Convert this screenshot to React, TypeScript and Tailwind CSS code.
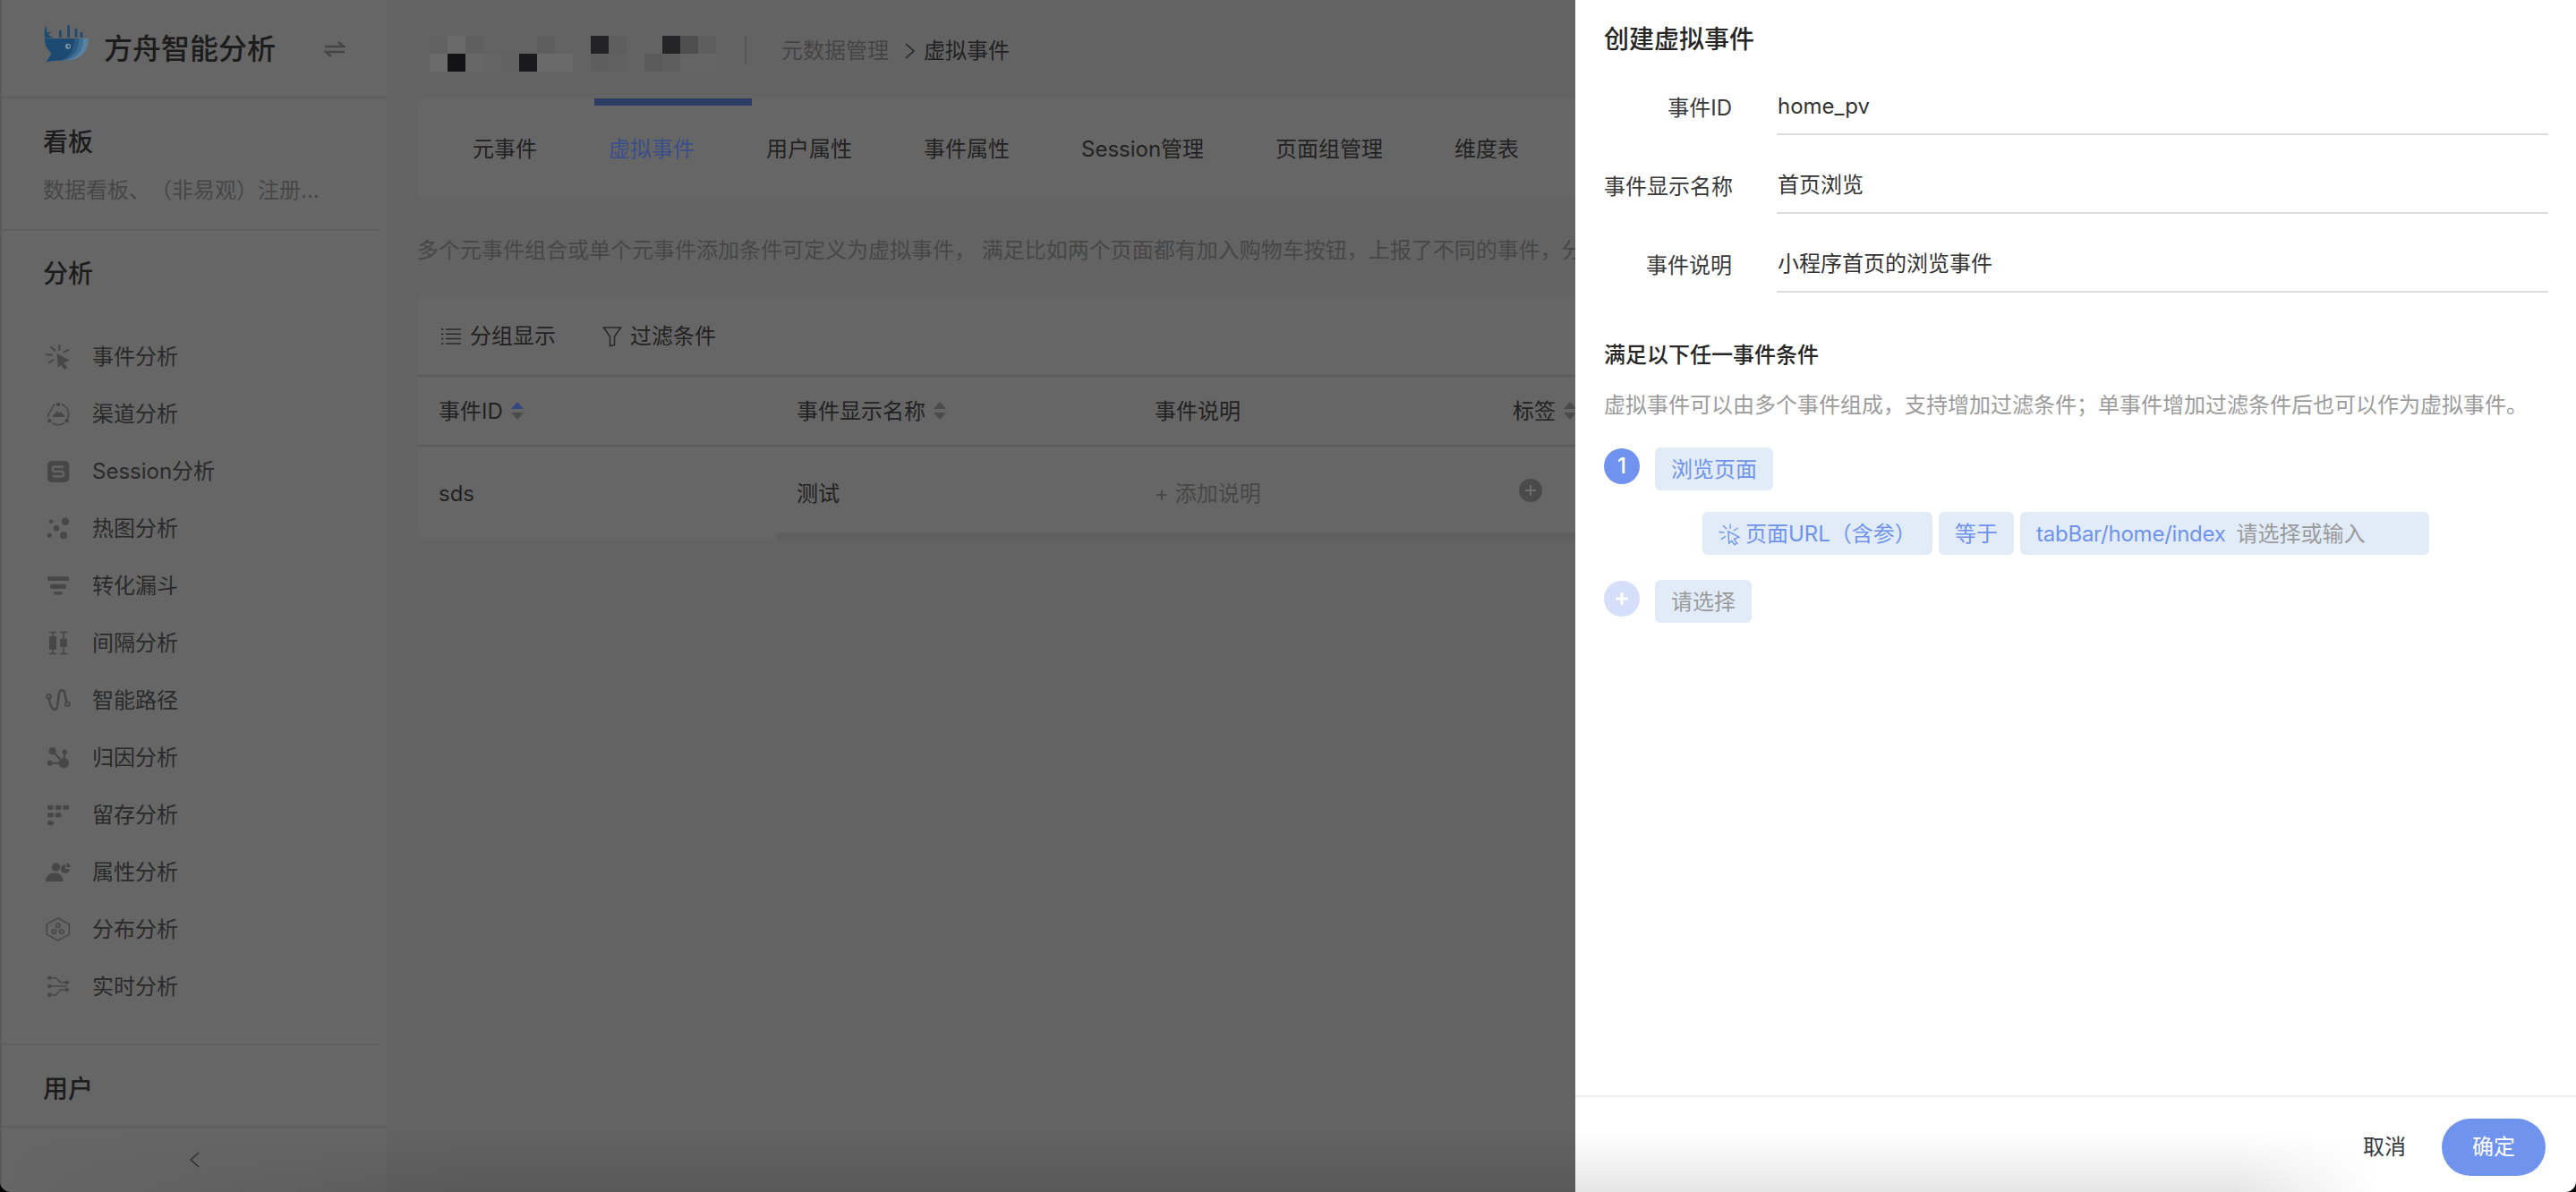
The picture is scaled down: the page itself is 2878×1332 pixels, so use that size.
import React from "react";

const NAV_ICON = "#474747";

const mosaicTop = [
  "bg-[#626262]", "bg-[#6a6a6a]", "bg-[#5f5f5f]", "bg-[#636363]", "bg-[#636363]", "bg-[#636363]", "bg-[#5e5e5e]", "bg-[#636363]",
  "bg-[#636363]", "bg-[#232325]", "bg-[#5e5e5e]", "bg-[#636363]", "bg-[#636363]", "bg-[#252527]", "bg-[#4e4e4e]", "bg-[#5e5e5e]",
];
const mosaicBottom = [
  "bg-[#6b6b6b]", "bg-[#131316]", "bg-[#676767]", "bg-[#656565]", "bg-[#626262]", "bg-[#1a1a1d]", "bg-[#6a6a6a]", "bg-[#6a6a6a]",
  "bg-[#636363]", "bg-[#5e5e5e]", "bg-[#616161]", "bg-[#636363]", "bg-[#5a5a5a]", "bg-[#5e5e5e]", "bg-[#656565]", "bg-[#656565]",
];

function Logo() {
  return (
    <svg width="70" height="60" viewBox="0 0 210 180" className="self-start mt-[20px] shrink-0">
      <path d="M35 25 C28 40 28 55 32 68 L58 66 L40 56 L56 44 L38 50 Z" fill="#1d4a70" />
      <rect x="78" y="42" width="8" height="24" fill="#1d4a70" />
      <rect x="106" y="25" width="8" height="41" fill="#1d4a70" />
      <rect x="131" y="35" width="8" height="31" fill="#1d4a70" />
      <rect x="149" y="48" width="8" height="18" fill="#1d4a70" />
      <path d="M30 70 H176 C176 115 150 140 105 142 C85 143 60 143 35 148 C42 135 50 128 52 118 C38 105 30 90 30 70 Z" fill="#5a83a3" />
      <path d="M30 70 H160 C160 112 136 136 100 142 C85 143 60 143 35 148 C42 135 50 128 52 118 C38 105 30 90 30 70 Z" fill="#3f6f95" />
      <path d="M30 70 H145 C145 108 124 132 95 142 C85 143 60 143 35 148 C42 135 50 128 52 118 C38 105 30 90 30 70 Z" fill="#2a5a82" />
      <path d="M30 70 H130 C130 105 112 130 88 142 C78 143 60 143 35 148 C42 135 50 128 52 118 C38 105 30 90 30 70 Z" fill="#1d4a70" />
      <circle cx="108" cy="95" r="9" fill="#7c97ab" />
      <circle cx="110" cy="95" r="4" fill="#1d4a70" />
    </svg>
  );
}

function Svg({ children }: { children: React.ReactNode }) {
  return (
    <svg width="26" height="26" viewBox="0 0 26 26" className="shrink-0 overflow-visible" fill={NAV_ICON} stroke="none">
      {children}
    </svg>
  );
}

const lineProps = { stroke: NAV_ICON, strokeWidth: 1.6, strokeLinecap: "round" as const, fill: "none" };

const icons: Record<string, React.ReactNode> = {
  click: (
    <>
      <polygon points="11.7,9.3 26,16.7 19.3,19.3 23.3,25 20,26.7 16,21.7 12.7,25" />
      <g {...lineProps} strokeWidth={2}>
        <path d="M5 1.7 9.3 5.7M14.3 0V5M24.3 5 19.3 7.7M0 10 6 10.7M2.7 19.3 7.7 16" />
      </g>
    </>
  ),
  channel: (
    <>
      <g {...lineProps}>
        <path d="M5 8.5A12 12 0 0 1 9 1.8M17 1.8A12 12 0 0 1 24.6 12 12 12 0 0 1 23.5 18M19.5 22.8A12 12 0 0 1 7 23" />
        <path d="M1.6 16A12 12 0 0 1 5 8.5" />
      </g>
      <circle cx="13" cy="2" r="2.2" />
      <circle cx="3.3" cy="20.3" r="2.2" />
      <circle cx="22.7" cy="20.3" r="2.2" />
      <polygon points="6,16 11.7,9.3 14.3,12 16,10 21,16" />
    </>
  ),
  session: (
    <>
      <rect x="1" y="1" width="24.3" height="24" rx="5" />
      <path d="M19 7.5H9.5a2.7 2.7 0 0 0 0 5.4h7a2.7 2.7 0 0 1 0 5.4H7" fill="none" stroke="#666666" strokeWidth="2.3" />
    </>
  ),
  dots: (
    <>
      <circle cx="5" cy="4.7" r="2.3" />
      <circle cx="21" cy="4.7" r="4.2" />
      <circle cx="11" cy="12.3" r="3.3" />
      <circle cx="3.3" cy="20.3" r="2.6" />
      <circle cx="19" cy="20.3" r="4" />
    </>
  ),
  funnel: (
    <>
      <rect x="1" y="2.3" width="24" height="4.7" rx="1" />
      <rect x="4.3" y="10.7" width="17.3" height="5.3" rx="1" />
      <rect x="8.3" y="19.3" width="9.3" height="3.3" rx="1" />
    </>
  ),
  interval: (
    <>
      <rect x="3" y="5" width="8" height="15" rx="1" />
      <rect x="15" y="7.7" width="8" height="9" rx="1" />
      <g {...lineProps} strokeLinecap="butt">
        <path d="M3 0.5H11M7 0.5V24.5M3 24.5H11M15 0.5H23M19 0.5V24.5M15 24.5H23" />
      </g>
    </>
  ),
  path: (
    <g {...lineProps} strokeWidth={2.6}>
      <circle cx="2.7" cy="8.3" r="2.3" strokeWidth={2} />
      <circle cx="23.3" cy="16.7" r="2.3" strokeWidth={2} />
      <path d="M2.7 11.500C4 18 5.500 23 9.300 23 15 23 11 1.300 17 1.300 21.700 1.300 20.500 11 22.500 14" />
    </g>
  ),
  attribution: (
    <>
      <g {...lineProps} strokeWidth={2}>
        <path d="M6.7 5.3 19.3 18.7M20.3 6.3 19.3 18.7M3.7 18.7H19.3" />
      </g>
      <circle cx="6.7" cy="5.3" r="4" />
      <circle cx="20.3" cy="6.3" r="2.7" />
      <circle cx="3.7" cy="18.7" r="3" />
      <circle cx="19.3" cy="18.7" r="5.7" />
    </>
  ),
  retention: (
    <>
      <rect x="1" y="1.7" width="6.7" height="5" rx="1.4" />
      <rect x="9.7" y="1.7" width="6.7" height="5" rx="1.4" />
      <rect x="18.3" y="1.7" width="6.7" height="5" rx="1.4" />
      <rect x="1" y="10.3" width="6.7" height="5" rx="1.4" />
      <rect x="9.7" y="10.3" width="6.7" height="5" rx="1.4" />
      <rect x="1" y="19.3" width="6.7" height="5" rx="1.4" />
    </>
  ),
  attr: (
    <>
      <circle cx="10.500" cy="7" r="4.700" />
      <path d="M-1 23C-1 16.500 4 13.500 9 13.500 14 13.500 18.500 16.500 18.500 23Z" />
      <path d="M21 4A5 5 0 1 0 26 9H21Z" />
      <path d="M22.500 2.600A5 5 0 0 1 27 7H22.500Z" />
    </>
  ),
  dist: (
    <g {...lineProps} strokeWidth={1.5}>
      <path d="M12.7 0 25.3 6.7V18.3L12.7 25 0.3 18.3V6.7Z" />
      <circle cx="12.7" cy="8.3" r="2.2" />
      <circle cx="8.3" cy="15" r="2.2" />
      <circle cx="17" cy="15" r="2.2" />
    </g>
  ),
  realtime: (
    <>
      <g {...lineProps}>
        <path d="M3.3 2.7H10.5L15.5 7.7H22.7M3.3 12H22M3.3 21.7H10.5L15.5 16H22.7" />
      </g>
      <circle cx="3.3" cy="2.7" r="2.2" />
      <circle cx="3.3" cy="12" r="2.2" />
      <circle cx="3.3" cy="21.7" r="2.2" />
      <circle cx="22.7" cy="7.7" r="2.2" />
      <circle cx="22.7" cy="16" r="2.2" />
    </>
  ),
};

const navItems = [
  { icon: "click", label: "事件分析" },
  { icon: "channel", label: "渠道分析" },
  { icon: "session", label: "Session分析" },
  { icon: "dots", label: "热图分析" },
  { icon: "funnel", label: "转化漏斗" },
  { icon: "interval", label: "间隔分析" },
  { icon: "path", label: "智能路径" },
  { icon: "attribution", label: "归因分析" },
  { icon: "retention", label: "留存分析" },
  { icon: "attr", label: "属性分析" },
  { icon: "dist", label: "分布分析" },
  { icon: "realtime", label: "实时分析" },
];

const tabs = ["元事件", "虚拟事件", "用户属性", "事件属性", "Session管理", "页面组管理", "维度表"];

function SortIcon({ active }: { active?: boolean }) {
  return (
    <svg width="16" height="20" viewBox="0 0 16 20" className="shrink-0 ml-[8px] -mt-[2px]">
      <polygon points="8,0 15,8 1,8" fill={active ? "#35477f" : "#4b4b4b"} />
      <polygon points="8,20 15,12 1,12" fill="#4b4b4b" />
    </svg>
  );
}

function Sidebar() {
  return (
    <aside className="w-[432px] h-full shrink-0 flex flex-col bg-[#666666] border-l-2 border-[#5a5a5a]">
      <div className="h-[110px] shrink-0 flex items-center pl-[38px] border-b-2 border-[#5e5e5e]">
        <Logo />
        <span className="ml-[6px] text-[32px] leading-[44px] font-medium text-[#1c1c1c] mt-[2px]">方舟智能分析</span>
        <svg width="24" height="18" viewBox="0 0 24 18" className="ml-[54px] mt-[2px]" fill="none" stroke="#454545" strokeWidth="2.4">
          <path d="M1 6H22L16 1M23 12H2L8 17" />
        </svg>
      </div>
      <div className="flex-1 min-h-0 overflow-hidden mr-[8px]">
        <div className="pt-[29px] pb-[27px] pl-[46px] border-b-2 border-[#5e5e5e]">
          <div className="text-[28px] leading-[40px] font-medium text-[#1c1c1c]">看板</div>
          <div className="mt-[18px] text-[24px] leading-[32px] text-[#474747] [text-spacing-trim:space-all]">数据看板、（非易观）注册...</div>
        </div>
        <div className="pt-[28px] pb-[32px] border-b-2 border-[#5e5e5e]">
          <div className="pl-[46px] text-[28px] leading-[40px] font-medium text-[#1c1c1c]">分析</div>
          <div className="mt-[40px]">
            {navItems.map((item) => (
              <div key={item.label} className="h-[64px] flex items-center pl-[50px]">
                <div className="mt-[1px]">
                  <Svg>{icons[item.icon]}</Svg>
                </div>
                <span className="ml-[25px] pt-[2px] text-[24px] leading-[32px] text-[#2a2a2a]">{item.label}</span>
              </div>
            ))}
          </div>
        </div>
        <div className="pt-[29px] pl-[46px] text-[28px] leading-[40px] font-medium text-[#1c1c1c]">用户</div>
      </div>
      <div className="h-[74px] shrink-0 border-t-2 border-[#5e5e5e] flex items-center justify-center">
        <svg width="12" height="18" viewBox="0 0 12 18" fill="none" stroke="#333333" strokeWidth="1.6">
          <path d="M11 1 2 9 11 17" />
        </svg>
      </div>
    </aside>
  );
}

function Main() {
  return (
    <main className="flex-1 min-w-0 h-full bg-[#636363] overflow-hidden">
      <div className="h-[110px] flex pl-[48px]">
        <div className="mt-[40px] blur-[0.6px]">
          <div className="flex">
            {mosaicTop.map((c, i) => (
              <div key={i} className={`w-[20px] h-[20px] ${c}`} />
            ))}
          </div>
          <div className="flex">
            {mosaicBottom.map((c, i) => (
              <div key={i} className={`w-[20px] h-[20px] ${c}`} />
            ))}
          </div>
        </div>
        <div className="w-[2px] h-[32px] mt-[40px] ml-[32px] bg-[#565656]" />
        <div className="ml-[39px] mt-[41px] h-[32px] flex items-center text-[24px] leading-[32px] whitespace-nowrap">
          <span className="text-[#454545]">元数据管理</span>
          <svg width="14" height="20" viewBox="0 0 14 20" className="ml-[17px] mr-[8px]" fill="none" stroke="#2a2a2a" strokeWidth="1.6">
            <path d="M2 2 11 10 2 18" />
          </svg>
          <span className="text-[#222222]">虚拟事件</span>
        </div>
      </div>

      <div className="relative ml-[34px] h-[111px] rounded-lg bg-[#666666] flex items-center pl-[22px] pt-[2px]">
        <div className="absolute left-[198px] top-0 w-[176px] h-[8px] bg-[#2e3d66]" />
        {tabs.map((t, i) => (
          <div key={t} className={`px-[40px] text-[24px] leading-[32px] whitespace-nowrap ${i === 1 ? "text-[#3a4f88]" : "text-[#222222]"}`}>
            {t}
          </div>
        ))}
      </div>

      <div className="ml-[34px] mt-[43px] text-[24px] leading-[32px] text-[#474747] whitespace-nowrap">
        多个元事件组合或单个元事件添加条件可定义为虚拟事件， 满足比如两个页面都有加入购物车按钮，上报了不同的事件，分别统计
      </div>

      <div className="relative ml-[34px] mt-[34px] rounded-lg bg-[#666666]">
        <div className="h-[91px] flex items-center pl-[27px] pt-[3px] border-b-2 border-[#5b5b5b] text-[24px] leading-[32px] text-[#222222]">
          <svg width="22" height="20" viewBox="0 0 22 20" fill="none" stroke="#2a2a2a" strokeWidth="1.5">
            <path d="M5 2H22M5 7.300H22M5 12.600H22M5 18H22M0 2H2.500M0 7.300H2.500M0 12.600H2.500M0 18H2.500" />
          </svg>
          <span className="ml-[10px]">分组显示</span>
          <svg width="22" height="24" viewBox="0 0 22 24" className="ml-[52px]" fill="none" stroke="#2a2a2a" strokeWidth="1.6">
            <path d="M1.500 2H20.500L13.500 12V21.500L8.500 22.500V12Z" />
          </svg>
          <span className="ml-[9px]">过滤条件</span>
        </div>
        <div className="h-[78px] flex items-center pl-[24px] pt-[2px] border-b-2 border-[#5b5b5b] text-[24px] leading-[32px] text-[#222222] whitespace-nowrap">
          <div className="w-[400px] flex items-center">
            事件ID
            <SortIcon active />
          </div>
          <div className="w-[400px] flex items-center">
            事件显示名称
            <SortIcon />
          </div>
          <div className="w-[400px]">事件说明</div>
          <div className="w-[400px] flex items-center">
            标签
            <SortIcon />
          </div>
        </div>
        <div className="h-[103px] flex items-center pl-[24px] pt-[2px] text-[24px] leading-[32px] text-[#222222] whitespace-nowrap">
          <div className="w-[400px]">sds</div>
          <div className="w-[400px]">测试</div>
          <div className="w-[400px] text-[#474747]">+ 添加说明</div>
          <div className="w-[400px] pl-[7px] -mt-[8px]">
            <svg width="26" height="26" viewBox="0 0 26 26">
              <circle cx="13" cy="13" r="13" fill="#4a4a4a" />
              <path d="M13 7V19M7 13H19" stroke="#6d6d6d" strokeWidth="2" />
            </svg>
          </div>
        </div>
        <div className="absolute left-[401px] right-0 -bottom-[3px] h-[10px] rounded-l-md bg-[#5f5f5f]" />
      </div>
    </main>
  );
}

function Chip({ className, children }: { className?: string; children: React.ReactNode }) {
  return <div className={`h-[48px] pt-[1px] flex items-center rounded-md bg-[#e1ecf8] text-[24px] leading-[32px] whitespace-nowrap ${className ?? ""}`}>{children}</div>;
}

function FormRow({ label, value }: { label: string; value: string }) {
  return (
    <div className="h-[88px] flex items-end text-[24px] leading-[32px]">
      <div className="w-[143px] pb-[14px] text-right text-[#3a3a3a] whitespace-nowrap">{label}</div>
      <div className="ml-[50px] flex-1 pl-[1px] pb-[14px] border-b-2 border-[#dddddd] text-[#333333]">{value}</div>
    </div>
  );
}

function Drawer() {
  return (
    <section className="absolute right-0 top-0 bottom-0 w-[1118px] flex flex-col bg-white">
      <div className="flex-1 min-h-0 pl-[32px] pr-[31px]">
        <div className="pt-[25px] text-[28px] leading-[38px] font-medium text-[#262626]">创建虚拟事件</div>
        <FormRow label="事件ID" value="home_pv" />
        <FormRow label="事件显示名称" value="首页浏览" />
        <FormRow label="事件说明" value="小程序首页的浏览事件" />
        <div className="mt-[54px] text-[24px] leading-[32px] font-medium text-[#262626]">满足以下任一事件条件</div>
        <div className="mt-[24px] text-[24px] leading-[32px] text-[#9c9c9c] whitespace-nowrap">
          虚拟事件可以由多个事件组成，支持增加过滤条件；单事件增加过滤条件后也可以作为虚拟事件。
        </div>
        <div className="mt-[31px] flex items-start gap-[17px]">
          <div className="mt-px w-[40px] h-[40px] rounded-full bg-[#6f93ee] text-white flex items-center justify-center text-[24px] leading-[32px] font-medium">1</div>
          <Chip className="px-[18px] text-[#6f93ee]">浏览页面</Chip>
        </div>
        <div className="mt-[24px] ml-[110px] flex gap-[7px]">
          <Chip className="w-[257px] pl-[19px] text-[#6f93ee]">
            <svg width="22" height="22" viewBox="0 0 26 26" className="overflow-visible" fill="none" stroke="#6f93ee" strokeWidth="1.6" strokeLinecap="round">
              <path d="M5 1.700 9.300 5.700M14.300 0V5M24.300 5 19.300 7.700M0 10 6 10.700M2.700 19.300 7.700 16" />
              <path d="M11.700 9.300 26 16.700 19.300 19.300 23.300 25 20 26.700 16 21.700 12.700 25Z" />
            </svg>
            <span className="ml-[7px]">页面URL（含参）</span>
          </Chip>
          <Chip className="w-[84px] justify-center text-[#6f93ee]">等于</Chip>
          <Chip className="w-[457px] pl-[18px]">
            <span className="text-[#6f93ee] tracking-[-0.01em]">tabBar/home/index</span>
            <span className="ml-[12px] text-[#9a9a9a]">请选择或输入</span>
          </Chip>
        </div>
        <div className="mt-[28px] flex items-start gap-[17px]">
          <div className="mt-px w-[40px] h-[40px] rounded-full bg-[#d5dffa] flex items-center justify-center">
            <svg width="14" height="14" viewBox="0 0 14 14">
              <path d="M7 0V14M0 7H14" stroke="#ffffff" strokeWidth="3" />
            </svg>
          </div>
          <Chip className="px-[18px] text-[#9a9a9a]">请选择</Chip>
        </div>
      </div>
      <div className="h-[108px] shrink-0 border-t-2 border-[#eeeeee] pt-[24px] pr-[34px] flex items-start justify-end gap-[40px]">
        <div className="h-[64px] flex items-center text-[24px] leading-[32px] text-[#333a42]">取消</div>
        <div className="w-[116px] h-[64px] rounded-full bg-[#7094ee] text-white flex items-center justify-center text-[24px] leading-[32px]">确定</div>
      </div>
    </section>
  );
}

export default function App() {
  return (
    <div className="w-[2878px] h-[1332px] bg-black">
      <div className="relative w-full h-full overflow-hidden rounded-b-[12px] flex font-['Inter','Noto_Sans_CJK_SC',sans-serif] antialiased">
        <Sidebar />
        <Main />
        <Drawer />
        {/* shadow the screen capture left along the bottom edge */}
        <div className="absolute left-0 right-[220px] bottom-0 h-[66px] pointer-events-none bg-gradient-to-t from-black/10 to-transparent [mask-image:linear-gradient(to_right,transparent,black_20%,black_94%,transparent)]" />
      </div>
    </div>
  );
}
